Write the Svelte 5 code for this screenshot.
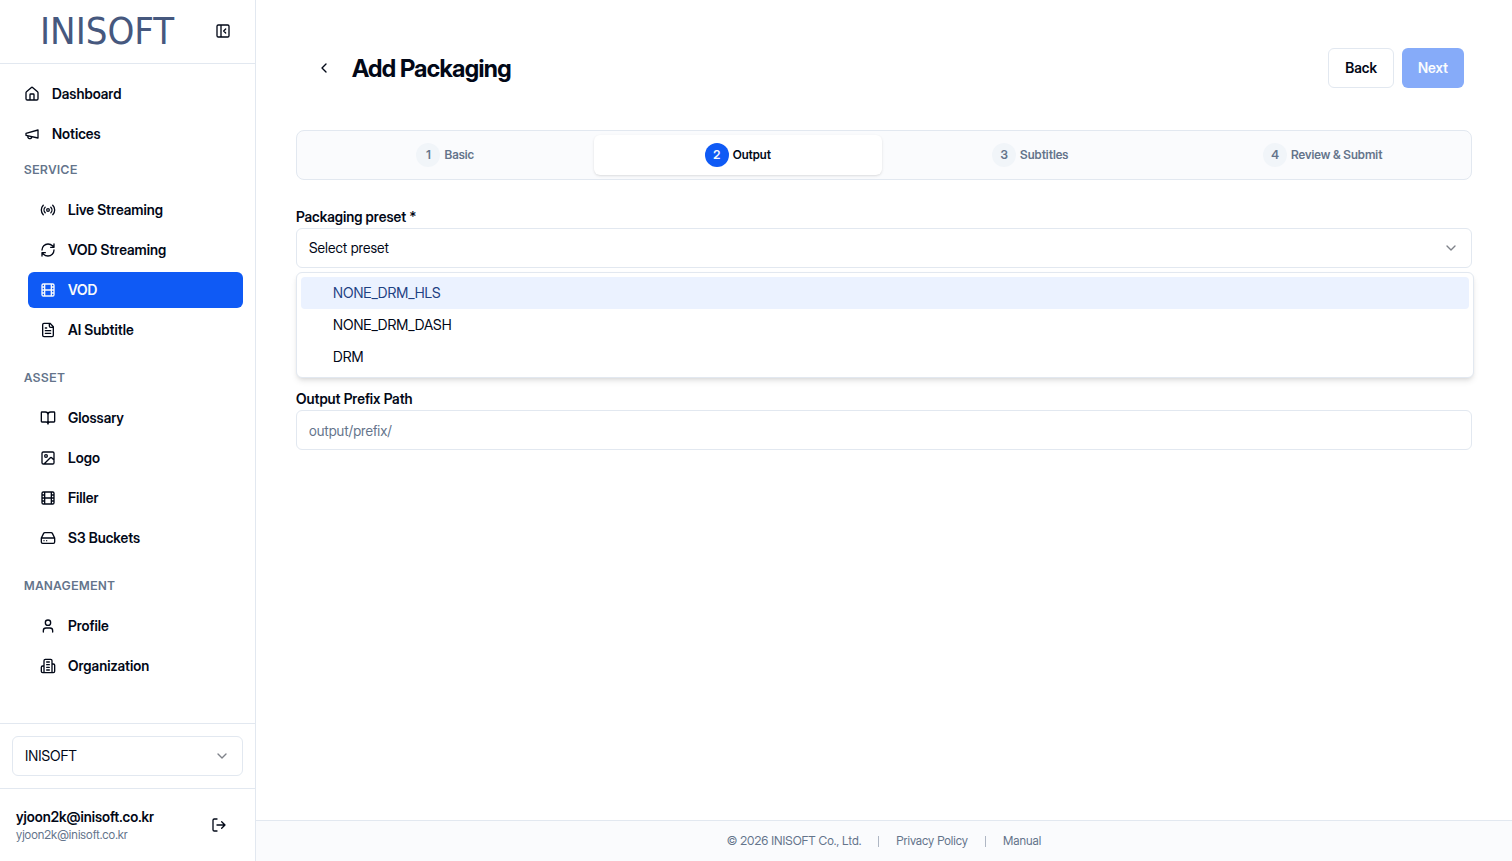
<script>
  const icons = {
    house: 'M15 21v-8a1 1 0 0 0-1-1h-4a1 1 0 0 0-1 1v8 M3 10a2 2 0 0 1 .709-1.528l7-5.999a2 2 0 0 1 2.582 0l7 5.999A2 2 0 0 1 21 10v9a2 2 0 0 1-2 2H5a2 2 0 0 1-2-2z',
    megaphone: 'm3 11 18-5v12L3 14v-3z M11.6 16.8a3 3 0 1 1-5.8-1.6',
    radio: 'M4.9 19.1C1 15.2 1 8.8 4.9 4.9 M7.8 16.2c-2.3-2.3-2.3-6.1 0-8.5 M10 12a2 2 0 1 0 4 0a2 2 0 1 0-4 0 M16.2 7.8c2.3 2.3 2.3 6.1 0 8.5 M19.1 4.9C23 8.8 23 15.1 19.1 19',
    refresh: 'M3 12a9 9 0 0 1 9-9 9.75 9.75 0 0 1 6.74 2.74L21 8 M21 3v5h-5 M21 12a9 9 0 0 1-9 9 9.75 9.75 0 0 1-6.74-2.74L3 16 M8 16H3v5',
    film: 'M5 3h14a2 2 0 0 1 2 2v14a2 2 0 0 1-2 2H5a2 2 0 0 1-2-2V5a2 2 0 0 1 2-2z M7 3v18 M3 7.5h4 M3 12h18 M3 16.5h4 M17 3v18 M17 7.5h4 M17 16.5h4',
    file: 'M15 2H6a2 2 0 0 0-2 2v16a2 2 0 0 0 2 2h12a2 2 0 0 0 2-2V7Z M14 2v4a2 2 0 0 0 2 2h4 M10 9H8 M16 13H8 M16 17H8',
    book: 'M12 7v14 M3 18a1 1 0 0 1-1-1V4a1 1 0 0 1 1-1h5a4 4 0 0 1 4 4 4 4 0 0 1 4-4h5a1 1 0 0 1 1 1v13a1 1 0 0 1-1 1h-6a3 3 0 0 0-3 3 3 3 0 0 0-3-3z',
    image: 'M5 3h14a2 2 0 0 1 2 2v14a2 2 0 0 1-2 2H5a2 2 0 0 1-2-2V5a2 2 0 0 1 2-2z M7 9a2 2 0 1 0 4 0a2 2 0 1 0-4 0 m14 6-3.086-3.086a2 2 0 0 0-2.828 0L6 21',
    drive: 'M22 12H2 M5.45 5.11 2 12v6a2 2 0 0 0 2 2h16a2 2 0 0 0 2-2v-6l-3.45-6.89A2 2 0 0 0 16.76 4H7.24a2 2 0 0 0-1.79 1.11z M6 16h.01 M10 16h.01',
    user: 'M19 21v-2a4 4 0 0 0-4-4H9a4 4 0 0 0-4 4v2 M8 7a4 4 0 1 0 8 0a4 4 0 1 0-8 0',
    building: 'M6 22V4a2 2 0 0 1 2-2h8a2 2 0 0 1 2 2v18Z M6 12H4a2 2 0 0 0-2 2v6a2 2 0 0 0 2 2h2 M18 9h2a2 2 0 0 1 2 2v9a2 2 0 0 1-2 2h-2 M10 6h4 M10 10h4 M10 14h4 M10 18h4',
    panel: 'M5 3h14a2 2 0 0 1 2 2v14a2 2 0 0 1-2 2H5a2 2 0 0 1-2-2V5a2 2 0 0 1 2-2z M9 3v18 m7-6-3-3 3-3',
    logout: 'M9 21H5a2 2 0 0 1-2-2V5a2 2 0 0 1 2-2h4 M16 17l5-5-5-5 M21 12H9',
    left: 'm15 18-6-6 6-6',
    down: 'm6 9 6 6 6-6'
  };

  const topLinks = [
    { label: 'Dashboard', icon: 'house' },
    { label: 'Notices', icon: 'megaphone' }
  ];

  const groups = [
    {
      title: 'SERVICE',
      links: [
        { label: 'Live Streaming', icon: 'radio' },
        { label: 'VOD Streaming', icon: 'refresh' },
        { label: 'VOD', icon: 'film', active: true },
        { label: 'AI Subtitle', icon: 'file' }
      ]
    },
    {
      title: 'ASSET',
      links: [
        { label: 'Glossary', icon: 'book' },
        { label: 'Logo', icon: 'image' },
        { label: 'Filler', icon: 'film' },
        { label: 'S3 Buckets', icon: 'drive' }
      ]
    },
    {
      title: 'MANAGEMENT',
      links: [
        { label: 'Profile', icon: 'user' },
        { label: 'Organization', icon: 'building' }
      ]
    }
  ];

  const steps = ['Basic', 'Output', 'Subtitles', 'Review & Submit'];
  const presets = ['NONE_DRM_HLS', 'NONE_DRM_DASH', 'DRM'];

  let step = $state(1);
  let preset = $state('');
  let open = $state(true);
  let highlighted = $state(0);

  function toggle(event) {
    event.preventDefault();
    open = !open;
  }

  function choose(name) {
    preset = name;
    open = false;
  }
</script>

{#snippet icon(name)}
  <svg class="icon" viewBox="0 0 24 24" aria-hidden="true"><path d={icons[name]} /></svg>
{/snippet}

<div class="app">
  <aside class="sidebar">
    <header class="brand">
      <a class="logo" href="#home">INISOFT</a>
      <button class="icon-button" aria-label="Collapse sidebar">{@render icon('panel')}</button>
    </header>

    <nav class="nav">
      <div class="links">
        {#each topLinks as link}
          <a class="link" href="#{link.icon}">{@render icon(link.icon)}{link.label}</a>
        {/each}
      </div>
      {#each groups as group}
        <section class="group">
          <h2 class="group-title">{group.title}</h2>
          <div class="links nested">
            {#each group.links as link}
              <a class="link" class:active={link.active} href="#{link.icon}">{@render icon(link.icon)}{link.label}</a>
            {/each}
          </div>
        </section>
      {/each}
    </nav>

    <div class="organization">
      <div class="select-box">
        <select class="control" aria-label="Organization">
          <option>INISOFT</option>
        </select>
        <span class="chevron">{@render icon('down')}</span>
      </div>
    </div>

    <div class="account">
      <div class="account-text">
        <span class="account-name">yjoon2k@inisoft.co.kr</span>
        <span class="account-mail">yjoon2k@inisoft.co.kr</span>
      </div>
      <button class="icon-button" aria-label="Log out">{@render icon('logout')}</button>
    </div>
  </aside>

  <div class="page">
    <main class="content">
      <header class="heading">
        <button class="icon-button" aria-label="Go back">{@render icon('left')}</button>
        <h1 class="title">Add Packaging</h1>
        <button class="button outline">Back</button>
        <button class="button primary" disabled>Next</button>
      </header>

      <div class="steps" role="tablist">
        {#each steps as name, i}
          <button class="step" class:current={i === step} role="tab" aria-selected={i === step} onclick={() => (step = i)}>
            <span class="number">{i + 1}</span>{name}
          </button>
        {/each}
      </div>

      <form class="form">
        <div class="field">
          <label class="label" for="preset">Packaging preset *</label>
          <div class="select-box">
            <select class="control" id="preset" bind:value={preset} onmousedown={toggle}>
              <option value="">Select preset</option>
              {#each presets as name}
                <option value={name}>{name}</option>
              {/each}
            </select>
            <span class="chevron">{@render icon('down')}</span>
            {#if open}
              <div class="menu" role="listbox" aria-label="Packaging preset">
                {#each presets as name, i}
                  <button
                    type="button"
                    class="option"
                    class:highlighted={i === highlighted}
                    role="option"
                    aria-selected={preset === name}
                    onmouseenter={() => (highlighted = i)}
                    onclick={() => choose(name)}>{name}</button>
                {/each}
              </div>
            {/if}
          </div>
        </div>

        <div class="field">
          <label class="label" for="prefix">Output Prefix Path</label>
          <input class="control" id="prefix" type="text" placeholder="output/prefix/" />
        </div>
      </form>
    </main>

    <footer class="footer">
      <span>© 2026 INISOFT Co., Ltd.</span>
      <span class="divider"></span>
      <a href="#privacy">Privacy Policy</a>
      <span class="divider"></span>
      <a href="#manual">Manual</a>
    </footer>
  </div>
</div>

<style>
  :global(body) {
    margin: 0;
    background: #fff;
  }

  .app {
    --ink: #020817;
    --muted: #64748b;
    --line: #e2e8f0;
    --primary: #0f5af5;
    display: flex;
    min-height: 100vh;
    color: var(--ink);
    font: 400 14px/20px "Inter Display", Inter, sans-serif;
  }

  .app * {
    box-sizing: border-box;
  }

  a {
    color: inherit;
    text-decoration: none;
  }

  button,
  input,
  select {
    margin: 0;
    color: inherit;
    font: inherit;
  }

  .icon {
    display: block;
    flex: none;
    width: 16px;
    height: 16px;
    fill: none;
    stroke: currentColor;
    stroke-width: 2;
    stroke-linecap: round;
    stroke-linejoin: round;
  }

  .icon-button {
    display: grid;
    place-items: center;
    flex: none;
    width: 40px;
    height: 40px;
    padding: 0;
    border: 0;
    border-radius: 6px;
    background: none;
  }

  .sidebar {
    display: flex;
    flex-direction: column;
    flex: none;
    width: 256px;
    border-right: 1px solid var(--line);
  }

  .brand {
    display: flex;
    align-items: center;
    justify-content: space-between;
    height: 64px;
    padding: 0 12px 1px 40px;
    border-bottom: 1px solid var(--line);
  }

  .logo {
    color: #46587e;
    font: 400 38px/56px "DejaVu Sans Condensed", "DejaVu Sans", sans-serif;
  }

  .nav {
    flex: 1;
    padding: 12px;
  }

  .links {
    display: flex;
    flex-direction: column;
    gap: 4px;
  }

  .nested {
    padding-left: 16px;
  }

  .link {
    display: flex;
    align-items: center;
    gap: 12px;
    height: 36px;
    padding: 0 12px;
    border-radius: 6px;
    font-weight: 600;
  }

  .link.active {
    background: var(--primary);
    color: #f8fafc;
  }

  .group + .group {
    margin-top: 12px;
  }

  .group-title {
    margin: 0;
    padding: 10px 12px 14px;
    color: var(--muted);
    font-size: 12px;
    font-weight: 600;
    line-height: 16px;
    letter-spacing: 0.05em;
  }

  .organization {
    padding: 12px;
    border-top: 1px solid var(--line);
  }

  .account {
    display: flex;
    align-items: center;
    justify-content: space-between;
    padding: 16px;
    border-top: 1px solid var(--line);
  }

  .account-text {
    display: flex;
    flex-direction: column;
  }

  .account-name {
    font-weight: 600;
  }

  .account-mail {
    color: var(--muted);
    font-size: 12px;
    line-height: 16px;
  }

  .page {
    display: flex;
    flex: 1;
    flex-direction: column;
    min-width: 0;
  }

  .content {
    flex: 1;
    padding: 48px 40px;
  }

  .heading {
    display: flex;
    align-items: center;
    gap: 8px;
    padding: 0 8px;
  }

  .title {
    flex: 1;
    margin: 0;
    padding-top: 2px;
    font-size: 24px;
    font-weight: 700;
    line-height: 32px;
    letter-spacing: -0.025em;
  }

  .button {
    height: 40px;
    padding: 0 16px;
    border: 0;
    border-radius: 6px;
    font-weight: 600;
  }

  .outline {
    border: 1px solid var(--line);
    background: #fff;
  }

  .primary {
    background: var(--primary);
    color: #f8fafc;
  }

  .primary:disabled {
    opacity: 0.5;
  }

  .steps {
    display: grid;
    grid-template-columns: repeat(4, 1fr);
    gap: 4px;
    margin-top: 42px;
    padding: 4px;
    border: 1px solid var(--line);
    border-radius: 8px;
    background: #fafbfd;
  }

  .step {
    display: flex;
    align-items: center;
    justify-content: center;
    gap: 4px;
    height: 40px;
    padding: 0 8px;
    border: 0;
    border-radius: 6px;
    background: none;
    color: var(--muted);
    font-size: 12px;
    font-weight: 600;
    line-height: 16px;
  }

  .step.current {
    background: #fff;
    color: var(--ink);
    box-shadow: 0 1px 3px rgb(0 0 0 / 0.1), 0 1px 2px -1px rgb(0 0 0 / 0.1);
  }

  .number {
    display: grid;
    place-items: center;
    width: 24px;
    height: 24px;
    border-radius: 50%;
    background: #f1f5f9;
  }

  .current .number {
    background: var(--primary);
    color: #f8fafc;
  }

  .form {
    display: flex;
    flex-direction: column;
    gap: 121px;
    margin-top: 27px;
  }

  .label {
    display: block;
    padding-bottom: 1px;
    font-weight: 600;
  }

  .select-box {
    position: relative;
  }

  .control {
    display: block;
    width: 100%;
    height: 40px;
    padding: 0 12px;
    border: 1px solid var(--line);
    border-radius: 6px;
    outline: 0;
    background: #fff;
    appearance: none;
  }

  .control::placeholder {
    color: var(--muted);
    opacity: 1;
  }

  .chevron {
    position: absolute;
    top: 12px;
    right: 13px;
    opacity: 0.5;
    pointer-events: none;
  }

  .menu {
    position: absolute;
    z-index: 1;
    top: 44px;
    right: -2px;
    left: 0;
    padding: 4px;
    border: 1px solid var(--line);
    border-radius: 6px;
    background: #fff;
    box-shadow: 0 4px 6px -1px rgb(0 0 0 / 0.1), 0 2px 4px -2px rgb(0 0 0 / 0.1);
  }

  .option {
    display: block;
    width: 100%;
    height: 32px;
    padding: 0 32px;
    border: 0;
    border-radius: 4px;
    background: none;
    text-align: left;
  }

  .option.highlighted {
    background: #ebf2ff;
    color: #1e4182;
  }

  .footer {
    display: flex;
    align-items: center;
    justify-content: center;
    gap: 17px;
    padding: 12px 16px;
    border-top: 1px solid var(--line);
    background: #fafbfd;
    color: var(--muted);
    font-size: 12px;
    line-height: 16px;
  }

  .divider {
    width: 1px;
    height: 11px;
    background: currentColor;
    opacity: 0.5;
  }
</style>
